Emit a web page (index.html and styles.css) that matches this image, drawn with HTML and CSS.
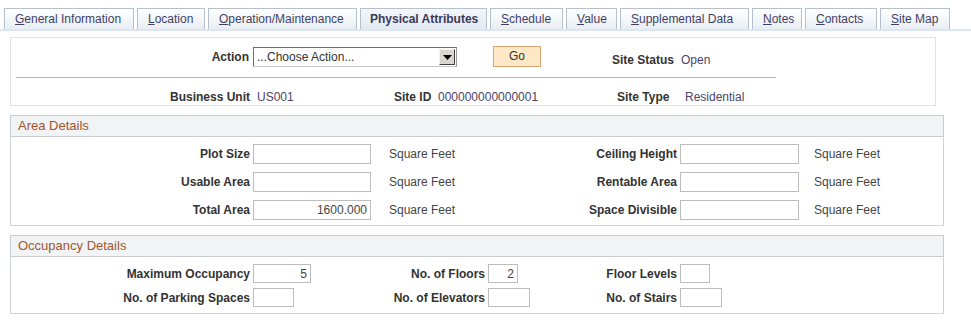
FILE: index.html
```html
<!DOCTYPE html>
<html>
<head>
<meta charset="utf-8">
<link rel="stylesheet" href="styles.css">
</head>
<body>
<div class="tabs">
  <div class="tab t1"><u>G</u>eneral Information</div>
  <div class="tab t2"><u>L</u>ocation</div>
  <div class="tab t3"><u>O</u>peration/Maintenance</div>
  <div class="tab t4 active">Physical Attributes</div>
  <div class="tab t5"><u>S</u>chedule</div>
  <div class="tab t6"><u>V</u>alue</div>
  <div class="tab t7"><u>S</u>upplemental Data</div>
  <div class="tab t8"><u>N</u>otes</div>
  <div class="tab t9"><u>C</u>ontacts</div>
  <div class="tab t10"><u>S</u>ite Map</div>
</div>

<div class="headbox">
  <div class="actrow">
    <span class="lbl w-main">Action</span>
    <div class="select"><span class="seltext">...Choose Action...</span><span class="selbtn"><svg width="9" height="5" viewBox="0 0 9 5"><path d="M0 0H9L4.5 5Z" fill="#000"/></svg></span></div>
    <div class="gobtn">Go</div>
    <span class="lbl status-lbl">Site Status</span>
    <span class="val status-val">Open</span>
  </div>
  <div class="rule"></div>
  <div class="keyrow">
    <span class="lbl w-main">Business Unit</span>
    <span class="val bu-val">US001</span>
    <span class="lbl siteid-lbl">Site ID</span>
    <span class="val siteid-val">000000000000001</span>
    <span class="lbl type-lbl">Site Type</span>
    <span class="val type-val">Residential</span>
  </div>
</div>

<div class="group">
  <div class="ghead">Area Details</div>
  <div class="gbody area">
    <span class="lbl">Plot Size</span><span class="inp"></span><span class="unit">Square Feet</span>
    <span class="lbl">Ceiling Height</span><span class="inp"></span><span class="unit">Square Feet</span>

    <span class="lbl">Usable Area</span><span class="inp"></span><span class="unit">Square Feet</span>
    <span class="lbl">Rentable Area</span><span class="inp"></span><span class="unit">Square Feet</span>

    <span class="lbl">Total Area</span><span class="inp">1600.000</span><span class="unit">Square Feet</span>
    <span class="lbl">Space Divisible</span><span class="inp"></span><span class="unit">Square Feet</span>
  </div>
</div>

<div class="group">
  <div class="ghead">Occupancy Details</div>
  <div class="gbody occ">
    <span class="lbl">Maximum Occupancy</span><span><span class="inp i58">5</span></span>
    <span class="lbl">No. of Floors</span><span><span class="inp i30">2</span></span>
    <span class="lbl">Floor Levels</span><span><span class="inp i30"></span></span>

    <span class="lbl">No. of Parking Spaces</span><span><span class="inp i41"></span></span>
    <span class="lbl">No. of Elevators</span><span><span class="inp i42"></span></span>
    <span class="lbl">No. of Stairs</span><span><span class="inp i42"></span></span>
  </div>
</div>
</body>
</html>
```

FILE: styles.css
```css
* { box-sizing: border-box; }
body {
  margin: 0;
  font-family: "Liberation Sans", Arial, sans-serif;
  font-size: 12px;
  color: #333;
  background: #fff;
}
.tabs {
  display: flex;
  gap: 3px;
  padding: 8px 0 0 4px;
  border-bottom: 2px solid #dde6ef;
  height: 31px;
}
.tab {
  flex: none;
  height: 21px;
  line-height: 20px;
  padding: 0 0 0 10px;
  border: 1px solid #b6c0cc;
  border-bottom: none;
  background: linear-gradient(#ffffff, #e9eef4);
  color: #3f3f66;
  white-space: nowrap;
}
.t1 { width: 130px; }
.t2 { width: 68px; }
.t3 { width: 149px; }
.t4 { width: 127px; }
.t5 { width: 73px; }
.t6 { width: 51px; }
.t7 { width: 129px; }
.t8 { width: 50px; }
.t9 { width: 72px; }
.t10 { width: 70px; }
.tab u { text-decoration: underline; }
.tab.active {
  font-weight: bold;
  color: #3a3a5a;
  background: linear-gradient(#f4f7fa, #e2e9f1);
  padding-left: 9px;
}
.lbl { font-weight: bold; color: #333; white-space: nowrap; }
.val { color: #4a4466; white-space: nowrap; }

.headbox {
  margin: 6px 0 0 10px;
  width: 926px;
  height: 69px;
  border: 1px solid #e2e2e2;
  padding-top: 8px;
}
.actrow {
  display: flex;
  align-items: center;
  height: 21px;
}
.w-main {
  width: 242px;
  text-align: right;
  padding-right: 4px;
}
.select {
  width: 204px;
  height: 20px;
  margin-top: 1px;
  border: 1px solid #6d6d6d;
  border-right-color: #9a9a9a;
  border-bottom-color: #c8c8c8;
  display: flex;
  align-items: center;
  justify-content: space-between;
  background: #fff;
}
.seltext { padding-left: 3px; color: #333; }
.selbtn {
  width: 16px;
  height: 16px;
  margin-right: 1px;
  background: #d9d6cf;
  border: 1px solid;
  border-color: #f2f2f2 #404040 #404040 #f2f2f2;
  display: flex;
  align-items: center;
  justify-content: center;
}
.gobtn {
  width: 48px;
  height: 21px;
  margin-left: 36px;
  border: 1px solid #d9a56e;
  background: #fde7c6;
  text-align: center;
  line-height: 19px;
  color: #333;
}
.status-lbl, .status-val {
  align-self: flex-end;
  line-height: 14px;
}
.status-lbl { margin-left: 71px; width: 61px; }
.status-val { margin-left: 8px; }
.rule {
  margin: 10px 0 0 5px;
  width: 760px;
  border-top: 1px solid #b5b5b5;
}
.keyrow {
  display: flex;
  align-items: center;
  margin-top: 12px;
}
.keyrow .w-main { padding-right: 3px; }
.bu-val { width: 141px; padding-left: 4px; }
.siteid-lbl { width: 44px; }
.siteid-val { width: 179px; }
.type-lbl { width: 68px; }

.group {
  margin: 9px 0 0 10px;
  width: 934px;
}
.ghead {
  height: 22px;
  line-height: 20px;
  border: 1px solid #c9cdd1;
  background: #f1f3f5;
  color: #a3552e;
  font-size: 13px;
  padding-left: 7px;
}
.gbody {
  border: 1px solid #cfd3d6;
  border-top: none;
  display: grid;
  align-items: center;
}
.gbody .lbl { text-align: right; padding-right: 3px; }
.inp {
  display: block;
  height: 20px;
  border: 1px solid #bdbdbd;
  background: #fff;
  text-align: right;
  padding-right: 3px;
  line-height: 18px;
  color: #444;
}
.unit { color: #444; padding-left: 18px; white-space: nowrap; }

.area {
  grid-template-columns: 242px 118px 140px 169px 119px auto;
  row-gap: 8px;
  padding: 7px 0 5px 0;
}
.area .unit:nth-child(6n) { padding-left: 15px; }

.occ {
  grid-template-columns: 242px 100px 135px 72px 120px auto;
  row-gap: 5px;
  padding: 7px 0 6px 0;
}
.occ .inp { height: 19px; }
.i58 { width: 58px; }
.i30 { width: 30px; }
.i41 { width: 41px; }
.i42 { width: 42px; }
```
